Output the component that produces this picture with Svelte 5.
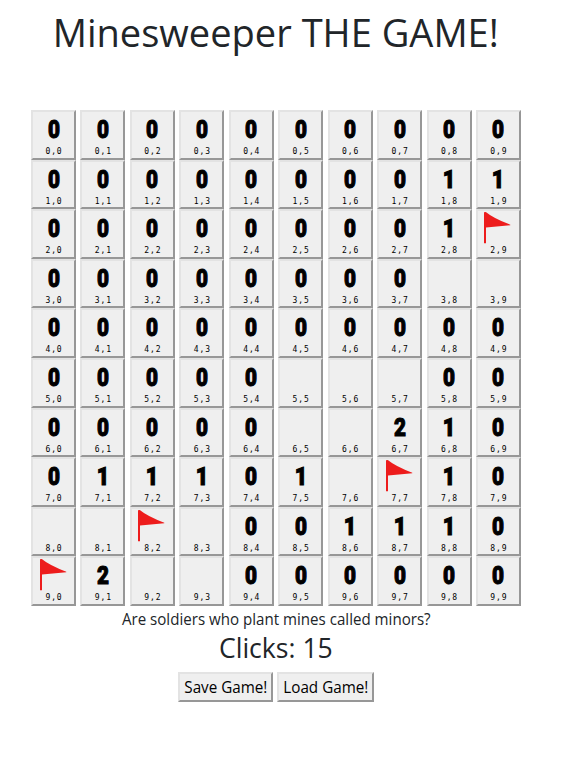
<script>
  const rows = [
    '0000000000',
    '0000000011',
    '000000001F',
    '00000000  ',
    '0000000000',
    '00000   00',
    '00000  210',
    '011101 F10',
    '  F 001110',
    'F2  000000',
  ];
  const clicks = 15;
</script>

<main>
  <h1><span>Minesweeper THE GAME!</span></h1>
  <div class="board">
    {#each rows as row, r}
      {#each row.split('') as cell, c}
        <button class="tile">
          <svg class="face" viewBox="0 0 40 35" aria-hidden="true">
            {#if cell === 'F'}
              <path d="M6 1.2L7.8 1Q15.5 7.4 32.3 13.7V14.3L8 16.6V32.2H6Z" fill="#ed1c1c" />
            {:else if cell !== ' '}
              <text class="digit" x="20" y="26.3" text-anchor="middle" textLength={cell === '1' ? 12.5 : 12} lengthAdjust="spacingAndGlyphs">{cell}</text>
            {/if}
          </svg>
          <span class="coord">{r},{c}</span>
        </button>
      {/each}
    {/each}
  </div>
  <p><span>Are soldiers who plant mines called minors?</span></p>
  <h2><span>Clicks: {clicks}</span></h2>
  <div class="actions">
    <button class="save"><span>Save Game!</span></button>
    <button class="load"><span>Load Game!</span></button>
  </div>
</main>

<style>
  :global(body) { background: #fff; }
  main {
    width: 552px;
    height: 758px;
    display: flex;
    flex-direction: column;
    align-items: center;
    font-family: "Open Sans", "Noto Sans", sans-serif;
    color: #212529;
  }
  h1, h2, p { margin: 0; font-weight: 400; white-space: nowrap; }
  h1 span, h2 span, p span, .actions span { display: inline-block; }
  h1 { height: 110px; line-height: 64px; font-size: 39.2px; }
  h1 span { transform: scaleX(.971); }
  .board {
    width: 490px;
    height: 496px;
    display: grid;
    grid-template-columns: repeat(10, 45px);
    grid-template-rows: repeat(10, 1fr);
    justify-content: space-between;
  }
  button {
    margin: 0;
    border: 2px solid;
    border-color: #e3e3e3 #979797 #979797 #e3e3e3;
    border-radius: 0;
    background: #efefef;
    color: #000;
    font-family: inherit;
  }
  .tile {
    padding: 0;
    display: flex;
    flex-direction: column;
    align-items: center;
    min-height: 0;
  }
  .face { width: 40px; height: 35px; flex: none; display: block; }
  .digit {
    font: 900 26.5px Roboto, sans-serif;
    fill: #000;
    stroke: #000;
    stroke-width: 1.1px;
  }
  .coord {
    font: 8px/10px "DejaVu Sans Mono", monospace;
    letter-spacing: .9px;
    padding-left: 1px;
  }
  p { height: 27px; line-height: 27px; font-size: 15.7px; }
  p span { transform: scaleX(.963); }
  h2 { height: 39px; line-height: 30px; font-size: 27.5px; }
  h2 span { transform: scaleX(.967); }
  .actions { display: flex; gap: 4px; }
  .actions button {
    height: 30px;
    padding: 0;
    font-size: 15.7px;
    line-height: 27px;
    white-space: nowrap;
    display: flex;
    justify-content: center;
  }
  .actions span { transform: scaleX(.97); }
  .save { width: 95px; }
  .load { width: 97px; }
</style>
